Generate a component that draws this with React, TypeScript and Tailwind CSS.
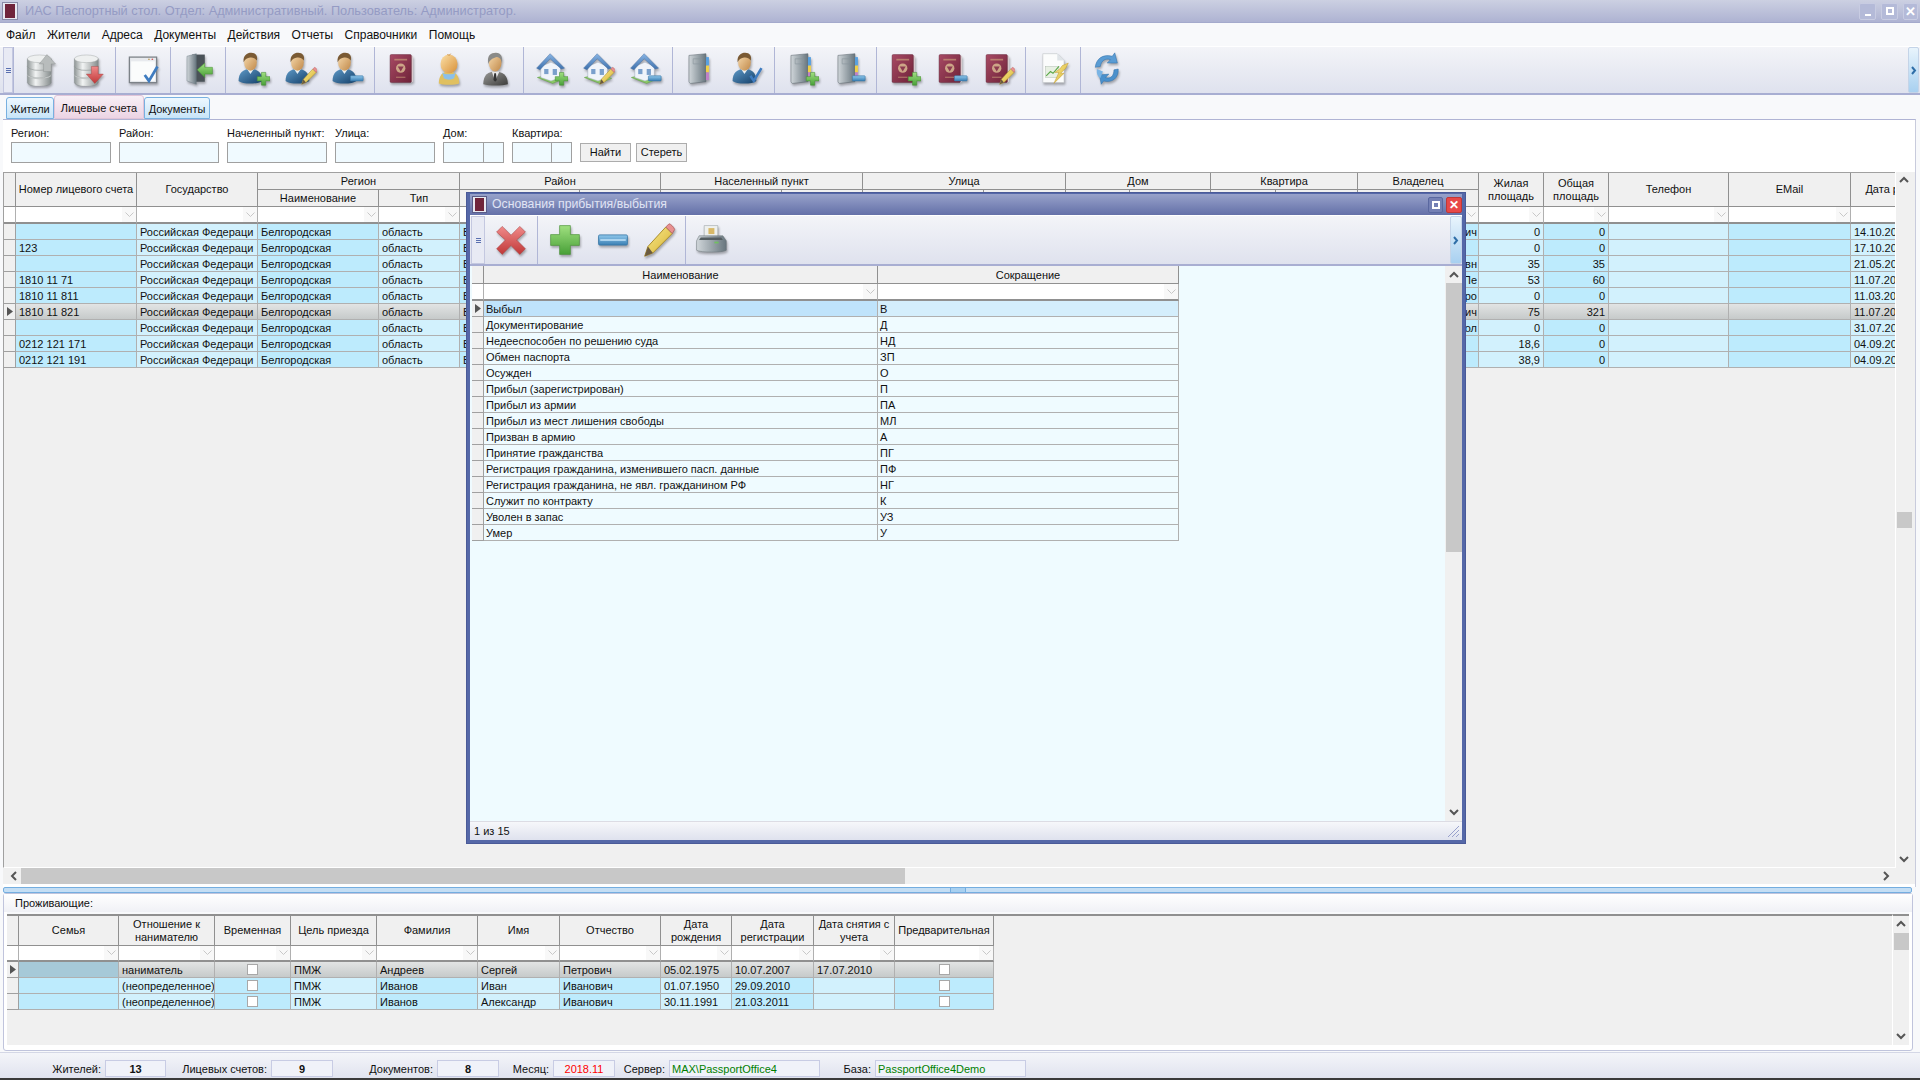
import React from "react";

const Ico = ({ children, s = 34 }: { children: React.ReactNode; s?: number }) => (
  <svg width={s} height={s} viewBox="0 0 40 40" className="block shrink-0 drop-shadow-[1px_2px_1px_rgba(0,0,0,0.3)]">{children}</svg>
);

const Defs = () => (
  <svg className="absolute w-0 h-0">
    <defs>
      <linearGradient id="gDb" x1="0" x2="1" y1="0" y2="0"><stop offset="0" stopColor="#8f9696" /><stop offset=".35" stopColor="#f2f4f4" /><stop offset="1" stopColor="#858c8c" /></linearGradient>
      <linearGradient id="gBlue" x1="0" x2="1" y1="0" y2="1"><stop offset="0" stopColor="#5f9ac8" /><stop offset="1" stopColor="#143f68" /></linearGradient>
      <linearGradient id="gSkin" x1="0" x2="1" y1="0" y2="1"><stop offset="0" stopColor="#f8dcb0" /><stop offset="1" stopColor="#c08848" /></linearGradient>
      <linearGradient id="gBaby" x1="0" x2="1" y1="0" y2="1"><stop offset="0" stopColor="#fbe0a8" /><stop offset="1" stopColor="#d89038" /></linearGradient>
      <linearGradient id="gPass" x1="0" x2="1" y1="0" y2="1"><stop offset="0" stopColor="#a84a64" /><stop offset="1" stopColor="#6e2238" /></linearGradient>
      <linearGradient id="gGreen" x1="0" x2="0" y1="0" y2="1"><stop offset="0" stopColor="#a0e080" /><stop offset="1" stopColor="#48a038" /></linearGradient>
      <linearGradient id="gMin" x1="0" x2="0" y1="0" y2="1"><stop offset="0" stopColor="#90c8ec" /><stop offset="1" stopColor="#3a7fb4" /></linearGradient>
      <linearGradient id="gPen" x1="0" x2="1" y1="0" y2="1"><stop offset="0" stopColor="#f8ec90" /><stop offset="1" stopColor="#d8b030" /></linearGradient>
      <linearGradient id="gRed" x1="0" x2="0" y1="0" y2="1"><stop offset="0" stopColor="#f08a8a" /><stop offset="1" stopColor="#c03838" /></linearGradient>
      <linearGradient id="gBook" x1="0" x2="1" y1="0" y2="0"><stop offset="0" stopColor="#d0d6da" /><stop offset="1" stopColor="#68767e" /></linearGradient>
      <linearGradient id="gSuit" x1="0" x2="1" y1="0" y2="1"><stop offset="0" stopColor="#9a9a98" /><stop offset="1" stopColor="#3c3c3a" /></linearGradient>
      <linearGradient id="gRoof" x1="0" x2="0" y1="0" y2="1"><stop offset="0" stopColor="#88b4e4" /><stop offset="1" stopColor="#3d70ac" /></linearGradient>
    </defs>
  </svg>
);

const Plus = ({ x = 25, y = 24, k = 1 }: { x?: number; y?: number; k?: number }) => (
  <path transform={`translate(${x} ${y}) scale(${k})`} d="M5 0h5v5h5v5h-5v5H5v-5H0V5h5z" fill="url(#gGreen)" stroke="#4a9038" strokeWidth=".7" />
);
const Minus = ({ x = 24, y = 28 }: { x?: number; y?: number }) => (
  <rect x={x} y={y} width="15" height="6" rx=".8" fill="url(#gMin)" stroke="#3a78a8" strokeWidth=".7" />
);
const Pen = ({ x = 22, y = 18, k = 1 }: { x?: number; y?: number; k?: number }) => (
  <g transform={`translate(${x} ${y}) scale(${k})`}>
    <path d="M0 20l2-6L13 2l4 4L5 18z" fill="url(#gPen)" stroke="#a88a28" strokeWidth=".6" />
    <path d="M13 2l2-2c1 0 3 2 3.500 3.500L17 6z" fill="#e89090" stroke="#b06060" strokeWidth=".5" />
    <path d="M0 20l2-6 3 4z" fill="#6a5a40" />
  </g>
);
const Check = () => <path d="M24 28l4 6 9-15" fill="none" stroke="#3f7cc0" strokeWidth="3" />;

const Cyl = ({ y }: { y: number }) => (
  <g>
    <path d={`M4 ${y}v9a14 4.500 0 0 0 28 0v-9z`} fill="url(#gDb)" stroke="#7f8686" strokeWidth=".5" />
    <ellipse cx="18" cy={y} rx="14" ry="4.500" fill="#eef0f0" stroke="#9aa0a0" strokeWidth=".5" />
  </g>
);
const Db = ({ down }: { down?: boolean }) => (
  <Ico>
    <Cyl y={27} /><Cyl y={17} /><Cyl y={8} />
    {down
      ? <path d="M28 37L18 26h6v-9h8v9h6z" fill="url(#gRed)" stroke="#a04040" strokeWidth=".5" />
      : <path d="M27 3l10 11h-5v9h-9v-9h-5z" fill="#b8bcbc" stroke="#8a8e8e" strokeWidth=".5" />}
  </Ico>
);
const WinCheck = () => (
  <Ico>
    <rect x="4" y="6" width="32" height="30" fill="#e8eaee" stroke="#7c8288" strokeWidth="1.500" />
    <rect x="6" y="11" width="28" height="23" fill="#fbfcfc" />
    <circle cx="31" cy="8.500" r="1" fill="#d06060" /><circle cx="27" cy="8.500" r="1" fill="#c0a060" />
    <path d="M22 27l5 7 10-17" fill="none" stroke="#3f7cc0" strokeWidth="3.200" />
  </Ico>
);
const Door = () => (
  <Ico>
    <path d="M13 3h15v32H13z" fill="#4a5258" />
    <path d="M7 5l11-3v36l-11-4z" fill="url(#gBook)" stroke="#6a7880" strokeWidth=".5" />
    <path d="M19 21l9-8v5h9v8h-9v4z" fill="url(#gGreen)" stroke="#4a9038" strokeWidth=".6" />
  </Ico>
);
const Person = ({ body = "url(#gBlue)", hair = "#7a5a34" }: { body?: string; hair?: string }) => (
  <g>
    <path d="M3 34c0-9 5-14 14-14s14 5 14 14c-4 4-24 4-28 0z" fill={body} />
    <path d="M13 20l4 6 4-6z" fill="#e8eef2" />
    <ellipse cx="17" cy="12" rx="7.500" ry="10" fill="url(#gSkin)" />
    <path d="M9 12C8 4 13 1 18 1s8 4 6.500 9c-2-3-5-4-8-3.500S11 8 9 12z" fill={hair} />
  </g>
);
const UserI = ({ o }: { o?: React.ReactNode }) => <Ico><Person />{o}</Ico>;
const Baby = () => (
  <Ico>
    <path d="M8 37c0-10 5-14 12-14s12 4 12 14c-4 2-20 2-24 0z" fill="#e0c060" />
    <path d="M12 24c3 3 13 3 16 0l-2 7c-3 2-9 2-12 0z" fill="#8cc0e8" />
    <ellipse cx="20" cy="14" rx="10" ry="11" fill="url(#gBaby)" />
    <path d="M18 3c2 1 3 1 4-1" fill="none" stroke="#c88838" strokeWidth="1" />
  </Ico>
);
const Man = () => (
  <Ico>
    <path d="M5 38c0-11 6-15 14-15s15 4 15 15c-6 2-23 2-29 0z" fill="url(#gSuit)" />
    <path d="M15 23l4 11 5-11z" fill="#e8e8e8" />
    <path d="M18 25h2l1 8-2 2-2-2z" fill="#333" />
    <ellipse cx="19" cy="12" rx="7.500" ry="11" fill="url(#gSkin)" />
    <path d="M11 14C9 4 14 1 20 1s8 5 7 12c-1-4-2-6-6-7-3 1-8 2-10 8z" fill="#8a8a88" />
  </Ico>
);
const Passport = ({ o }: { o?: React.ReactNode }) => (
  <Ico>
    <path d="M31 4l2 1v30l-2 1z" fill="#d8c8cc" />
    <rect x="6" y="3" width="25" height="33" rx="1.500" fill="url(#gPass)" stroke="#5a1c30" strokeWidth=".5" />
    <rect x="11" y="8" width="15" height="2" fill="#c89a78" opacity=".7" />
    <circle cx="18.500" cy="19" r="5.500" fill="#d8b890" opacity=".85" />
    <path d="M15 17l3.500 6 3.500-6z" fill="#8c3a50" />
    <rect x="13" y="29" width="11" height="1.500" fill="#c89a78" opacity=".6" />
    {o}
  </Ico>
);
const House = ({ o }: { o?: React.ReactNode }) => (
  <Ico>
    <path d="M4 30l16-4 16 5-14 6z" fill="#8cc868" stroke="#58983c" strokeWidth=".6" />
    <path d="M8 17l12-5 11 5v13l-11 4-12-4z" fill="#f0f4fa" stroke="#98a8b8" strokeWidth=".5" />
    <path d="M3 19L19 2l17 17-4 1-13-12L7 21z" fill="url(#gRoof)" stroke="#3b6498" strokeWidth=".5" />
    <rect x="12" y="20" width="5" height="6" fill="#7aa0cc" /><rect x="22" y="20" width="5" height="7" fill="#7aa0cc" />
    {o}
  </Ico>
);
const Book = ({ o }: { o?: React.ReactNode }) => (
  <Ico>
    <path d="M7 4l20-2v33l-18 2c-2-1-2-2-2-3z" fill="url(#gBook)" stroke="#555f66" strokeWidth=".6" />
    <rect x="27" y="6" width="3.500" height="10" fill="#58a0e0" /><rect x="27" y="16" width="3.500" height="8" fill="#f0d048" /><rect x="27" y="24" width="3.500" height="9" fill="#c080c8" />
    <path d="M12 8h10v6H12z" fill="none" stroke="#88949c" strokeWidth=".7" />
    {o}
  </Ico>
);
const Report = () => (
  <Ico>
    <path d="M8 2h17l8 8v26H8z" fill="#fbfcfc" stroke="#c0c4c8" strokeWidth=".7" />
    <path d="M25 2v8h8z" fill="#dfe4e8" />
    <rect x="11" y="17" width="16" height="13" fill="#e8f0e4" stroke="#a8b4a8" strokeWidth=".5" />
    <path d="M12 28l5-5 3 2 7-8" fill="none" stroke="#5ca848" strokeWidth="1.300" />
    <path d="M38 13l-7 3-3 4-6 4 5 0-6 13 12-12-4 0 6-6z" fill="url(#gPen)" stroke="#c09830" strokeWidth=".6" />
  </Ico>
);
const Refresh = () => (
  <Ico>
    <path d="M5 18C6 8 14 2 25 5l3-4 3 12-12 0 4-4c-6-2-11 1-12 8z" fill="#5a9cd4" stroke="#2f6ea8" strokeWidth=".6" />
    <path d="M32 20c1 10-7 17-17 14l-3 4-2-11 11-1-4 4c6 2 10-2 10-9z" fill="#4a90cc" stroke="#2f6ea8" strokeWidth=".6" />
    <path d="M7 20c-1 5 1 9 4 11l3-8z" fill="#7ab4e4" />
  </Ico>
);
const XIcon = () => (
  <Ico s={32}>
    <path d="M9 3l11 11L31 3l7 7-11 10 11 11-7 7-11-11L9 38l-7-7 11-11L2 10z" fill="url(#gRed)" stroke="#a84040" strokeWidth=".7" />
  </Ico>
);
const Printer = () => (
  <Ico s={34}>
    <path d="M12 3h16v14H12z" fill="#eef0ee" stroke="#90989c" strokeWidth=".6" />
    <rect x="17" y="6" width="7" height="7" fill="#d8b868" />
    <path d="M6 15h28l4 6v11c-4 3-30 3-35 0V21z" fill="url(#gBook)" stroke="#6a7478" strokeWidth=".6" />
    <path d="M8 17h24l2 3H6z" fill="#555e62" />
    <rect x="24" y="22" width="5" height="2" fill="#70c060" />
  </Ico>
);
const Grip = () => (
  <div className="flex flex-col gap-[1px]">
    <div className="w-[5px] h-[1px] bg-[#5a70b0]" /><div className="w-[5px] h-[1px] bg-[#5a70b0]" /><div className="w-[5px] h-[1px] bg-[#5a70b0]" />
  </div>
);
const Chev = ({ d }: { d: "u" | "d" | "l" | "r" }) => {
  const p = { u: "M1 6l4-4 4 4", d: "M1 3l4 4 4-4", l: "M6 1L2 5l4 4", r: "M3 1l4 4-4 4" }[d];
  return <svg width="10" height="10" viewBox="0 0 10 10" className="block"><path d={p} fill="none" stroke="#555" strokeWidth="2" /></svg>;
};
const Tri = () => <svg width="6" height="9" viewBox="0 0 6 9"><path d="M0 0l6 4.500L0 9z" fill="#555" /></svg>;

const Sec = ({ items }: { items: React.ReactNode[] }) => (
  <div className="flex pl-[3px] pr-[4px] pb-[2px] h-full items-center border-l border-l-[#b0b6d6]">
    {items.map((it, i) => <div key={i} className="w-[47px] flex justify-center">{it}</div>)}
  </div>
);

const FilterCell = ({ chev = true }: { chev?: boolean }) => (
  <div className="bg-white border-r border-r-[#b0b0b0] border-b-2 border-b-[#909090] flex justify-end items-stretch overflow-hidden">
    {chev && <div className="w-[14px] bg-[#f8f8f8] flex items-center justify-center">
      <svg width="9" height="6" viewBox="0 0 9 6"><path d="M.5.5l4 4 4-4" fill="none" stroke="#c8c8c8" /></svg>
    </div>}
  </div>
);
const Hd = ({ c, children }: { c?: string; children?: React.ReactNode }) => (
  <div className={`bg-[#f0f0f0] border-r border-r-[#909090] border-b border-b-[#909090] flex items-center justify-center text-center leading-[13px] overflow-hidden whitespace-nowrap ${c || ""}`}>{children}</div>
);
const SEL = "bg-gradient-to-b from-[#e2e4e4] to-[#c6caca]";
const Cell = ({ bright, sel, right, c, children }: { bright?: boolean; sel?: boolean; right?: boolean; c?: string; children?: React.ReactNode }) => (
  <div className={`h-[16px] border-r border-r-[#b0b0b0] border-b border-b-[#b0b0b0] px-[3px] pt-[1px] leading-[14px] overflow-hidden whitespace-nowrap ${right ? "text-right" : ""} ${sel ? SEL : bright ? "bg-[#bdebfd]" : "bg-[#d2f1fd]"} ${c || ""}`}>{children}</div>
);
const RowHead = ({ active }: { active?: boolean }) => (
  <div className="h-[16px] bg-[#f0f0f0] border-r border-r-[#a0a0a0] border-b border-b-[#a0a0a0] flex items-center justify-center">{active && <Tri />}</div>
);

const MAIN = "grid grid-cols-[12px_121px_121px_121px_81px_120px_81px_121px_81px_121px_82px_64px_81px_65px_82px_121px_65px_65px_120px_122px_121px] w-[2089px]";
const LOWER = "grid grid-cols-[12px_100px_96px_76px_86px_101px_82px_101px_71px_82px_81px_99px] w-[987px]";
const MODAL = "grid grid-cols-[12px_394px_301px] w-[707px]";

const mainRows = [
  ["", "вич", "0", "0", "14.10.2010"],
  ["123", "", "0", "0", "17.10.2010"],
  ["", "евн", "35", "35", "21.05.2010"],
  ["1810 11 71", "Пе", "53", "60", "11.07.2010"],
  ["1810 11 811", "ро", "0", "0", "11.03.2011"],
  ["1810 11 821", "ич", "75", "321", "11.07.2007"],
  ["", "кол", "0", "0", "31.07.2010"],
  ["0212 121 171", "", "18,6", "0", "04.09.2010"],
  ["0212 121 191", "", "38,9", "0", "04.09.2010"],
];
const lowerRows = [
  ["наниматель", "ПМЖ", "Андреев", "Сергей", "Петрович", "05.02.1975", "10.07.2007", "17.07.2010"],
  ["(неопределенное)", "ПМЖ", "Иванов", "Иван", "Иванович", "01.07.1950", "29.09.2010", ""],
  ["(неопределенное)", "ПМЖ", "Иванов", "Александр", "Иванович", "30.11.1991", "21.03.2011", ""],
];
const modalRows = [
  ["Выбыл", "В"], ["Документирование", "Д"], ["Недееспособен по решению суда", "НД"], ["Обмен паспорта", "ЗП"], ["Осужден", "О"],
  ["Прибыл (зарегистрирован)", "П"], ["Прибыл из армии", "ПА"], ["Прибыл из мест лишения свободы", "МЛ"], ["Призван в армию", "А"],
  ["Принятие гражданства", "ПГ"], ["Регистрация гражданина, изменившего пасп. данные", "ПФ"], ["Регистрация гражданина, не явл. гражданином РФ", "НГ"],
  ["Служит по контракту", "К"], ["Уволен в запас", "УЗ"], ["Умер", "У"],
];
const Box = () => <div className="w-[11px] h-[11px] mx-auto mt-[1px] bg-white border border-[#a8a8a8]" />;

const Field = ({ label, w, split }: { label: string; w: string; split?: boolean }) => (
  <div className={`flex flex-col ${w}`}>
    <div className="h-[14px] leading-[14px] whitespace-nowrap mb-[2px]">{label}</div>
    <div className="h-[21px] bg-[#f0faff] border border-[#a0a0a0] flex justify-end">
      {split && <div className="w-[20px] border-l border-l-[#a0a0a0]" />}
    </div>
  </div>
);
const Stat = ({ label, lw, bw, tc, children }: { label: string; lw: string; bw: string; tc: string; children: React.ReactNode }) => (
  <>
    <div className={`${lw} text-right pr-[4px] pt-[1px] whitespace-nowrap`}>{label}</div>
    <div className={`${bw} ${tc} h-[17px] leading-[16px] bg-[#f0f2f9] border border-[#c8cce4] whitespace-nowrap`}>{children}</div>
  </>
);

export default function App() {
  return (
    <div className="relative w-[1920px] h-[1080px] overflow-hidden flex flex-col bg-[#f8f9fb] text-[#111] text-[11px] font-['Liberation_Sans',sans-serif]">
      <Defs />
      {/* title bar */}
      <div className="h-[23px] shrink-0 flex items-center bg-gradient-to-b from-[#ccd0e2] to-[#aeb3d2] border-b border-b-[#a4aacc] pl-[2px]">
        <div className="w-[16px] h-[18px] bg-[#e8e8f0] border border-[#8a8ca8] flex items-center justify-center mr-[7px]">
          <div className="w-[10px] h-[14px] bg-[#70243a]" />
        </div>
        <div className="text-[12.75px] text-[#959bc4] whitespace-nowrap">ИАС Паспортный стол. Отдел: Административный. Пользователь: Администратор.</div>
        <div className="ml-auto flex gap-[5px] pr-[2px]">
          <div className="w-[17px] h-[17px] rounded-[2px] bg-[#b4bad8] border border-[#c8cce2] flex items-end justify-center pb-[3px]"><div className="w-[6px] h-[2px] bg-white" /></div>
          <div className="w-[17px] h-[17px] rounded-[2px] bg-[#b4bad8] border border-[#c8cce2] flex items-center justify-center"><div className="w-[8px] h-[8px] border-2 border-white" /></div>
          <div className="w-[15px] h-[17px] rounded-[2px] bg-[#b4bad8] border border-[#c8cce2] flex items-center justify-center text-white font-bold text-[13px] leading-none">✕</div>
        </div>
      </div>
      {/* menu */}
      <div className="h-[23px] shrink-0 flex items-center gap-[11.5px] pl-[6px]">
        {["Файл", "Жители", "Адреса", "Документы", "Действия", "Отчеты", "Справочники", "Помощь"].map((m) => <span key={m} className="text-[12px]">{m}</span>)}
      </div>
      {/* toolbar */}
      <div className="h-[49px] shrink-0 flex items-center pl-[3px] bg-gradient-to-b from-[#f3f4f8] to-[#dfe2ee] border-b-2 border-b-[#a8aed2] border-t border-t-white">
        <div className="w-[10px] h-full flex items-center justify-center border border-[#c4c8e0] bg-[#e8eaf4]"><Grip /></div>
        <Sec items={[<Db />, <Db down />]} />
        <Sec items={[<WinCheck />]} />
        <Sec items={[<Door />]} />
        <Sec items={[<UserI o={<Plus />} />, <UserI o={<Pen />} />, <UserI o={<Minus />} />]} />
        <Sec items={[<Passport />, <Baby />, <Man />]} />
        <Sec items={[<House o={<Plus />} />, <House o={<Pen />} />, <House o={<Minus />} />]} />
        <Sec items={[<Book />, <UserI o={<Check />} />]} />
        <Sec items={[<Book o={<Plus />} />, <Book o={<Minus />} />]} />
        <Sec items={[<Passport o={<Plus />} />, <Passport o={<Minus />} />, <Passport o={<Pen />} />]} />
        <Sec items={[<Report />]} />
        <Sec items={[<Refresh />]} />
        <div className="flex-1 h-full" />
        <div className="w-[11px] mr-[1px] h-full rounded-[2px] bg-gradient-to-b from-[#e8f4fc] to-[#a8d0f0] border border-[#c4d4e8] flex items-center justify-center">
          <svg width="6" height="9" viewBox="0 0 6 9"><path d="M1 1l3 3.500L1 8" fill="none" stroke="#2f6ea8" strokeWidth="2" /></svg>
        </div>
      </div>
      {/* tabs */}
      <div className="h-[24px] shrink-0 flex items-end pl-[6px]">
        <div className="w-[48px] h-[22px] pt-[3px] flex items-center justify-center rounded-t-[3px] border border-[#78b0e0] bg-gradient-to-b from-[#eef8ff] to-[#c8e4f8]">Жители</div>
        <div className="w-[90px] h-[24px] pt-[2px] flex items-center justify-center rounded-t-[3px] border border-[#e0c4d8] bg-gradient-to-b from-[#f8f0f6] to-[#ecd4e4]">Лицевые счета</div>
        <div className="w-[66px] h-[22px] pt-[3px] flex items-center justify-center rounded-t-[3px] border border-[#78b0e0] bg-gradient-to-b from-[#eef8ff] to-[#c8e4f8]">Документы</div>
      </div>
      {/* main panel */}
      <div className="h-[768px] shrink-0 ml-[3px] mr-[4px] flex flex-col bg-white border-t border-t-[#b0b4d4] border-r border-r-[#c8cbdc]">
        <div className="h-[52px] shrink-0 flex items-start gap-[8px] pl-[8px] pt-[6px]">
          <Field label="Регион:" w="w-[100px]" />
          <Field label="Район:" w="w-[100px]" />
          <Field label="Начеленный пункт:" w="w-[100px]" />
          <Field label="Улица:" w="w-[100px]" />
          <Field label="Дом:" w="w-[61px]" split />
          <Field label="Квартира:" w="w-[60px]" split />
          <div className="flex gap-[5px] mt-[17px]">
            <div className="w-[51px] h-[19px] bg-[#f0f0f0] border border-[#acacac] flex items-center justify-center">Найти</div>
            <div className="w-[51px] h-[19px] bg-[#f0f0f0] border border-[#acacac] flex items-center justify-center">Стереть</div>
          </div>
        </div>
        <div className="h-[696px] shrink-0 flex bg-white">
          <div className="w-[1892px] h-full bg-[#f0f0f0] border-l-[1px] border-l-[#a0a0a0] overflow-hidden border-b border-b-white">
            <div className={`${MAIN} grid-rows-[17px_17px] border-t border-t-[#a0a0a0]`}>
              <Hd c="row-span-2" />
              <Hd c="row-span-2">Номер лицевого счета</Hd>
              <Hd c="row-span-2">Государство</Hd>
              <Hd c="col-span-2">Регион</Hd>
              <Hd c="col-span-2">Район</Hd>
              <Hd c="col-span-2">Населенный пункт</Hd>
              <Hd c="col-span-2">Улица</Hd>
              <Hd c="col-span-2">Дом</Hd>
              <Hd c="col-span-2">Квартира</Hd>
              <Hd>Владелец</Hd>
              <Hd c="row-span-2">Жилая<br />площадь</Hd>
              <Hd c="row-span-2">Общая<br />площадь</Hd>
              <Hd c="row-span-2">Телефон</Hd>
              <Hd c="row-span-2">EMail</Hd>
              <Hd c="row-span-2">Дата регистрации</Hd>
              <Hd>Наименование</Hd><Hd>Тип</Hd>
              <Hd /><Hd /><Hd /><Hd /><Hd /><Hd /><Hd /><Hd /><Hd /><Hd /><Hd />
            </div>
            <div className={`${MAIN} h-[17px]`}>
              <FilterCell chev={false} />
              {Array.from({ length: 20 }).map((_, i) => <FilterCell key={i} />)}
            </div>
            {mainRows.map((r, i) => {
              const sel = i === 5;
              return (
                <div key={i} className={MAIN}>
                  <RowHead active={sel} />
                  <Cell bright sel={sel}>{r[0]}</Cell>
                  <Cell sel={sel}>Российская Федераци</Cell>
                  <Cell bright sel={sel}>Белгородская</Cell>
                  <Cell sel={sel}>область</Cell>
                  <Cell bright sel={sel}>Белгородский</Cell>
                  <Cell sel={sel} /><Cell bright sel={sel} /><Cell sel={sel} /><Cell bright sel={sel} /><Cell sel={sel} /><Cell bright sel={sel} /><Cell sel={sel} /><Cell bright sel={sel} /><Cell sel={sel} />
                  <Cell bright sel={sel} right c="!pr-[1px]">{r[1]}</Cell>
                  <Cell sel={sel} right>{r[2]}</Cell>
                  <Cell bright sel={sel} right>{r[3]}</Cell>
                  <Cell sel={sel} />
                  <Cell bright sel={sel} />
                  <Cell sel={sel}>{r[4]}</Cell>
                </div>
              );
            })}
          </div>
          <div className="w-[20px] h-full bg-[#f0f0f0] flex flex-col items-center border-l border-l-white pr-[3px]">
            <div className="h-[16px] pt-[4px]"><Chev d="u" /></div>
            <div className="h-[324px]" />
            <div className="w-[15px] h-[16px] bg-[#c8c8c8]" />
            <div className="flex-1" />
            <div className="h-[12px] mb-[2px]"><Chev d="d" /></div>
          </div>
        </div>
        <div className="h-[16px] shrink-0 bg-[#f0f0f0] flex items-center pl-[7px]">
          <Chev d="l" />
          <div className="ml-[1px] w-[884px] h-full bg-[#c8c8c8]" />
          <div className="ml-auto mr-[24px]"><Chev d="r" /></div>
        </div>
        <div className="flex-1 bg-white" />
      </div>
      {/* splitter */}
      <div className="h-[6px] shrink-0 ml-[3px] mr-[8px] rounded-[2px] border border-[#74aee0] bg-[#c4def4] relative">
        <div className="absolute left-[946px] -top-[1px] w-[16px] h-[6px] bg-[#a8d0f0] border border-[#74aee0]" />
      </div>
      {/* lower panel */}
      <div className="h-[158px] shrink-0 ml-[3px] mr-[7px] flex flex-col rounded-[3px] border border-[#c0c4dc] bg-white">
        <div className="h-[18px] shrink-0 flex items-center pl-[11px] bg-gradient-to-b from-white to-[#f0f1f6]">Проживающие:</div>
        <div className="flex-1 mx-[3px] flex border-t-2 border-t-[#f8f9fb] bg-[#f0f0f0] min-h-0 border-b-[5px] border-b-white">
          <div className="flex-1 min-w-0 border-t-2 border-t-[#909090]">
            <div className={`${LOWER} h-[30px]`}>
              <Hd />
              <Hd>Семья</Hd>
              <Hd>Отношение к<br />нанимателю</Hd>
              <Hd>Временная</Hd>
              <Hd>Цель приезда</Hd>
              <Hd>Фамилия</Hd>
              <Hd>Имя</Hd>
              <Hd>Отчество</Hd>
              <Hd>Дата<br />рождения</Hd>
              <Hd>Дата<br />регистрации</Hd>
              <Hd>Дата снятия с<br />учета</Hd>
              <Hd>Предварительная</Hd>
            </div>
            <div className={`${LOWER} h-[16px]`}>
              <FilterCell chev={false} />
              {Array.from({ length: 11 }).map((_, i) => <FilterCell key={i} />)}
            </div>
            {lowerRows.map((r, i) => {
              const sel = i === 0;
              return (
                <div key={i} className={LOWER}>
                  <RowHead active={sel} />
                  <Cell bright sel={false} c={sel ? "!bg-[#a6c9d8]" : ""} />
                  <Cell sel={sel}>{r[0]}</Cell>
                  <Cell bright sel={sel}><Box /></Cell>
                  <Cell sel={sel}>{r[1]}</Cell>
                  <Cell bright sel={sel}>{r[2]}</Cell>
                  <Cell sel={sel}>{r[3]}</Cell>
                  <Cell bright sel={sel}>{r[4]}</Cell>
                  <Cell sel={sel}>{r[5]}</Cell>
                  <Cell bright sel={sel}>{r[6]}</Cell>
                  <Cell sel={sel}>{r[7]}</Cell>
                  <Cell bright sel={sel}><Box /></Cell>
                </div>
              );
            })}
          </div>
          <div className="w-[17px] shrink-0 flex flex-col items-center border-l border-l-white border-t-2 border-t-[#909090]">
            <div className="h-[17px] pt-[4px]"><Chev d="u" /></div>
            <div className="w-[15px] h-[17px] bg-[#c8c8c8]" />
            <div className="flex-1" />
            <div className="h-[14px]"><Chev d="d" /></div>
          </div>
        </div>
      </div>
      {/* status */}
      <div className="mt-[1px] h-[26px] shrink-0 flex items-center pt-[6px] bg-gradient-to-b from-[#f4f5f9] to-[#e0e3ef] border-t border-t-[#d4d7e6]">
        <Stat label="Жителей:" lw="w-[105px]" bw="w-[61px]" tc="text-center font-bold">13</Stat>
        <Stat label="Лицевых счетов:" lw="w-[105px]" bw="w-[62px]" tc="text-center font-bold">9</Stat>
        <Stat label="Документов:" lw="w-[104px]" bw="w-[62px]" tc="text-center font-bold">8</Stat>
        <Stat label="Месяц:" lw="w-[54px]" bw="w-[62px]" tc="text-center text-[#ff0000]">2018.11</Stat>
        <Stat label="Сервер:" lw="w-[54px]" bw="w-[151px]" tc="pl-[2px] text-[#008000]">MAX\PassportOffice4</Stat>
        <Stat label="База:" lw="w-[55px]" bw="w-[151px]" tc="pl-[2px] text-[#008000]">PassportOffice4Demo</Stat>
      </div>
      <div className="h-[2px] shrink-0 bg-[#3a3a3a]" />

      {/* modal */}
      <div className="absolute left-[466px] top-[192px] w-[1000px] h-[652px] flex flex-col bg-[#5568a8] px-[3px] pb-[3px] pt-[1px] border border-[#4a5a98]">
        <div className="h-[21px] shrink-0 flex items-center bg-gradient-to-b from-[#98a2ca] to-[#6470a8] pl-[2px]">
          <div className="w-[15px] h-[17px] bg-[#e8e8f0] border border-[#5a5c88] flex items-center justify-center mr-[5px]">
            <div className="w-[9px] h-[13px] bg-[#70243a]" />
          </div>
          <div className="text-[12.25px] text-[#e0e4f4] whitespace-nowrap">Основания прибытия/выбытия</div>
          <div className="ml-auto flex gap-[3px]">
            <div className="w-[15px] h-[16px] rounded-[2px] bg-[#7480b4] border border-[#5a68a0] flex items-center justify-center"><div className="w-[8px] h-[8px] border-2 border-white" /></div>
            <div className="w-[16px] h-[16px] rounded-[2px] bg-[#e84848] border border-[#c03838] flex items-center justify-center text-white font-bold text-[12px] leading-none">✕</div>
          </div>
        </div>
        <div className="h-[51px] shrink-0 flex items-center bg-gradient-to-b from-[#f3f4f8] to-[#dfe2ee] border-b-2 border-b-[#a8aed2] border-t border-t-white">
          <div className="w-[14px] ml-[1px] h-full flex items-center justify-center border border-[#c4c8e0] bg-[#e8eaf4]"><Grip /></div>
          <div className="w-[53px] flex justify-center h-full items-center border-r border-r-[#b0b6d6]"><XIcon /></div>
          <div className="w-[148px] flex pl-[3px] h-full items-center border-r border-r-[#b0b6d6]">
            <div className="w-[48px] flex justify-center"><Ico s={36}><path d="M14 4h12v10h10v12H26v10H14V26H4V14h10z" fill="url(#gGreen)" stroke="#4a9038" strokeWidth=".7" /></Ico></div>
            <div className="w-[47px] flex justify-center"><Ico s={34}><rect x="3" y="14" width="34" height="12" rx="1.500" fill="url(#gMin)" stroke="#3a78a8" /><rect x="5" y="19" width="30" height="2" fill="#b8dcf4" /></Ico></div>
            <div className="w-[47px] flex justify-center"><Ico s={36}><Pen x={3} y={2} k={1.8} /></Ico></div>
          </div>
          <div className="pl-[8px]"><Printer /></div>
          <div className="ml-auto w-[12px] h-full rounded-[2px] bg-gradient-to-b from-[#e8f4fc] to-[#a8d0f0] border border-[#c4d4e8] flex items-center justify-center">
            <svg width="6" height="9" viewBox="0 0 6 9"><path d="M1 1l3 3.500L1 8" fill="none" stroke="#2f6ea8" strokeWidth="2" /></svg>
          </div>
        </div>
        <div className="flex-1 min-h-0 flex bg-[#effbff]">
          <div className="flex-1 pl-[2px]">
            <div className={`${MODAL} h-[18px]`}>
              <Hd /><Hd c="pt-[1px]">Наименование</Hd><Hd c="pt-[1px]">Сокращение</Hd>
            </div>
            <div className={`${MODAL} h-[17px]`}>
              <FilterCell chev={false} /><FilterCell /><FilterCell />
            </div>
            {modalRows.map((r, i) => (
              <div key={i} className={MODAL}>
                <RowHead active={i === 0} />
                <Cell c={i === 0 ? "!bg-[#bfe3fb] !pl-[2px]" : "!bg-[#effbff] !pl-[2px]"}>{r[0]}</Cell>
                <Cell c={i === 0 ? "!bg-[#d4eefc] !pl-[2px]" : "!bg-[#effbff] !pl-[2px]"}>{r[1]}</Cell>
              </div>
            ))}
          </div>
          <div className="w-[17px] shrink-0 flex flex-col items-center bg-[#f0f0f0]">
            <div className="h-[17px] pt-[5px]"><Chev d="u" /></div>
            <div className="w-[16px] h-[269px] bg-[#c8c8c8]" />
            <div className="flex-1" />
            <div className="h-[14px]"><Chev d="d" /></div>
          </div>
        </div>
        <div className="h-[19px] shrink-0 flex items-center justify-between pl-[4px] pr-[2px] bg-gradient-to-b from-[#f6f7fa] to-[#dfe2ee] border-t border-t-[#dcdce4]">
          <span>1 из 15</span>
          <svg width="13" height="13" viewBox="0 0 13 13"><path d="M1 12L12 1M5 12l7-7M9 12l3-3" stroke="#98a0cc" strokeWidth="1" fill="none" /></svg>
        </div>
      </div>
    </div>
  );
}
